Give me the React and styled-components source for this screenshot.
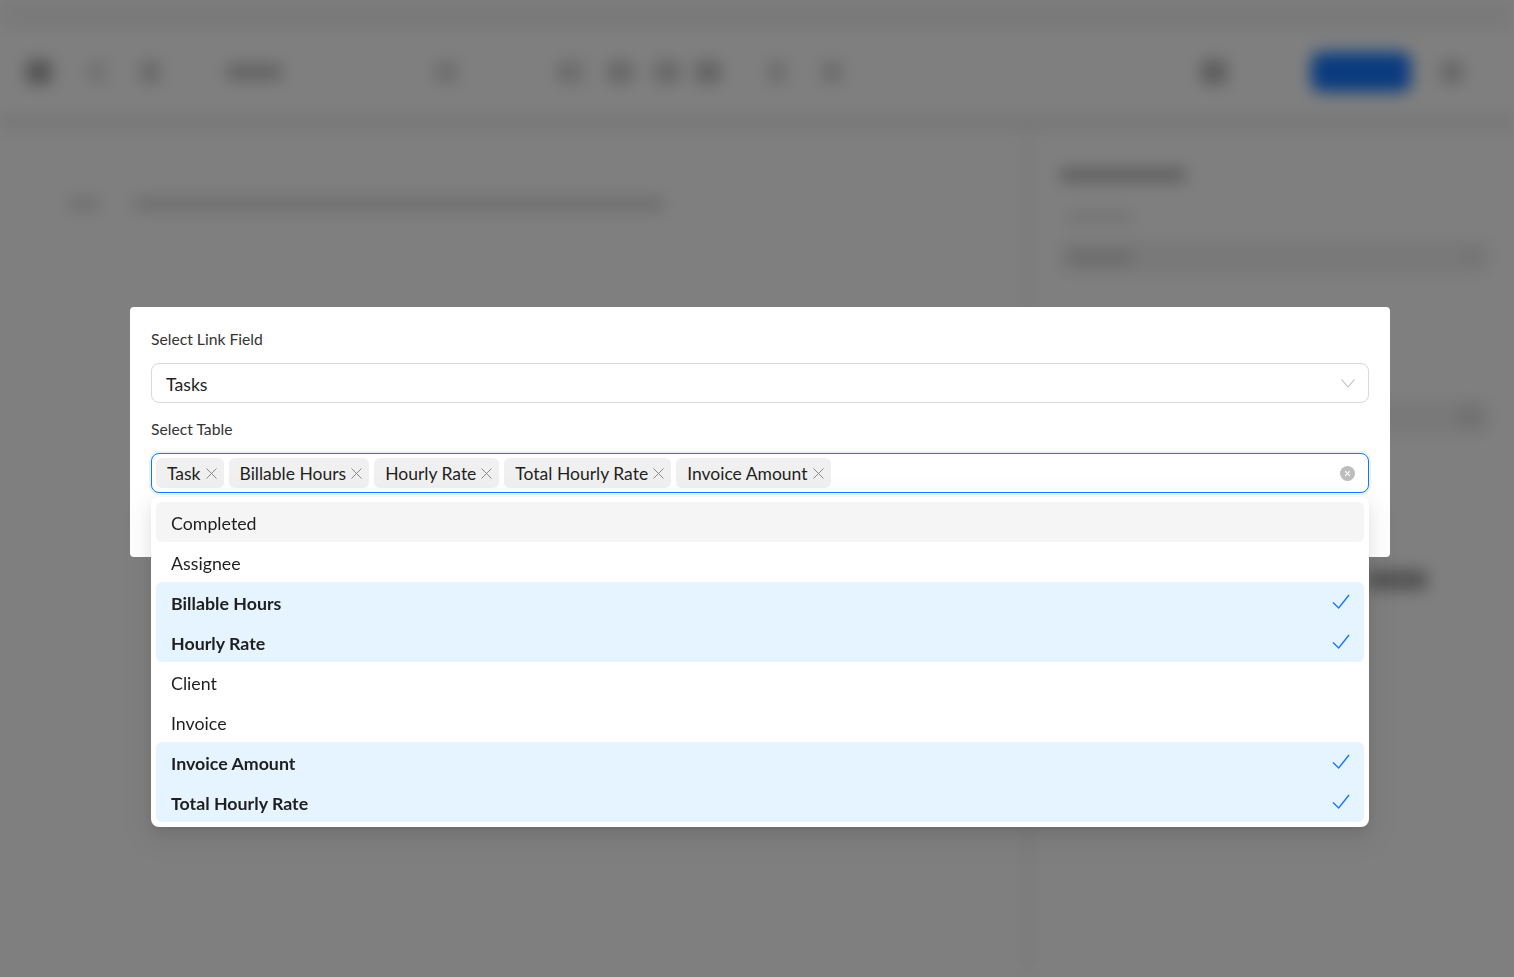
import React from 'react';
import styled, { createGlobalStyle } from 'styled-components';

const GlobalStyle = createGlobalStyle`
    html, body {
        margin:0;
        height:100%;
        overflow:hidden;
        background:#fff;
        font-family:"Lato", "Open Sans", "Liberation Sans", sans-serif;
    }
`;

const Page = styled.div`
    width:1514px;
    height:977px;
    display:flex;
    flex-direction:column;
    background:#fff;
    filter:blur(8px);
`;

const TopBar = styled.header`
    height:130px;
    flex:none;
    box-sizing:border-box;
    padding:0 51px 0 26px;
    display:flex;
    align-items:center;
    background:#fff;
    border-top:30px solid #f4f4f4;
    border-bottom:16px solid #efefef;
`;

const Blob = styled.span`
    flex:none;
    width:${p => p.$w || 20}px;
    height:${p => p.$h || 22}px;
    margin-left:${p => p.$gap || 0}px;
    border-radius:${p => p.$round || 4}px;
    background:${p => p.$color || '#d8d8d8'};
`;

const Spacer = styled.div`
    flex:1;
`;

const Body = styled.div`
    flex:1;
    display:flex;
`;

const Main = styled.main`
    flex:1;
    padding:62px 0 0 68px;
`;

const Crumbs = styled.div`
    display:flex;
    align-items:center;
    height:24px;
`;

const Side = styled.aside`
    width:489px;
    flex:none;
    box-sizing:border-box;
    padding:38px 24px 0 29px;
    border-left:6px solid #efefef;
    display:flex;
    flex-direction:column;
    align-items:flex-start;
`;

const SideTitle = styled.div`
    width:126px;
    height:14px;
    background:#bcbcbc;
    border-radius:4px;
`;

const SideLabel = styled.div`
    width:66px;
    height:10px;
    margin:30px 0 0 7px;
    background:#e4e4e4;
`;

const SideField = styled.div`
    width:100%;
    height:34px;
    margin-top:${p => p.$gap}px;
    box-sizing:border-box;
    padding:0 8px 0 7px;
    display:flex;
    align-items:center;
    justify-content:space-between;
    background:#f2f2f2;
    border-radius:4px;
`;

const SideValue = styled.div`
    width:66px;
    height:11px;
    background:#cfcfcf;
`;

const SideButton = styled.div`
    width:60px;
    height:20px;
    margin:136px 0 0 307px;
    border-radius:4px;
    background:#a4a4a4;
`;

const Overlay = styled.div`
    position:fixed;
    inset:0;
    background:rgba(0,0,0,0.5);
    display:flex;
    justify-content:center;
    align-items:flex-start;
    padding:307px 0 0 6px;
    box-sizing:border-box;
`;

const Modal = styled.div`
    width:1260px;
    height:250px;
    box-sizing:border-box;
    padding:20px 21px;
    background:#fff;
    border-radius:4px;
    color:#1f1f1f;
`;

const Field = styled.div`
    position:relative;
    display:flex;
    flex-direction:column;
`;

const Label = styled.label`
    display:block;
    height:24px;
    line-height:24px;
    font-size:15.7px;
    color:#333;
    margin-bottom:12px;
`;

const SelectBox = styled.div`
    height:40px;
    box-sizing:border-box;
    display:flex;
    align-items:center;
    border:1px solid ${p => (p.$focused ? '#1677ff' : '#d9d9d9')};
    border-radius:8px;
    background:#fff;
    margin-bottom:${p => (p.$focused ? 0 : 14)}px;
    padding:${p => (p.$focused ? '0 13px 0 4px' : '0 13px 0 14px')};
    box-shadow:${p => (p.$focused ? '0 0 0 2px rgba(5,145,255,0.1)' : 'none')};
    font-size:17.7px;
    color:#1f1f1f;
`;

const Value = styled.span`
    flex:1;
    padding-top:2px;
`;

const Tags = styled.div`
    flex:1;
    display:flex;
    align-items:center;
    gap:5px;
`;

const Tag = styled.span`
    display:flex;
    align-items:center;
    height:30px;
    box-sizing:border-box;
    padding:0 7px 0 11px;
    gap:5px;
    border-radius:6px;
    background:#f0f0f0;
    font-size:17.5px;
    white-space:nowrap;
`;

const TagClose = styled.svg`
    width:11px;
    height:11px;
    flex:none;
    stroke:#8a8a8a;
    stroke-width:1;
    fill:none;
`;

const Dropdown = styled.div`
    position:absolute;
    left:0;
    right:0;
    top:80px;
    box-sizing:border-box;
    padding:5px;
    background:#fff;
    border-radius:8px;
    box-shadow:0 6px 16px rgba(0,0,0,0.08), 0 3px 6px -4px rgba(0,0,0,0.12), 0 9px 28px 8px rgba(0,0,0,0.05);
`;

const Option = styled.div`
    height:40px;
    box-sizing:border-box;
    padding:2px 15px 0;
    display:flex;
    align-items:center;
    justify-content:space-between;
    font-size:17.8px;
    font-weight:${p => (p.$selected ? 700 : 400)};
    color:#1f1f1f;
    background:${p => (p.$selected ? '#e6f4ff' : p.$active ? '#f5f5f5' : 'transparent')};
    border-radius:${p => (p.$first ? '6px' : '0')} ${p => (p.$first ? '6px' : '0')} ${p => (p.$last ? '6px' : '0')} ${p => (p.$last ? '6px' : '0')};
`;

const Check = styled.svg`
    width:18px;
    height:18px;
    margin:-2px -1px 0 0;
    fill:none;
    stroke:#1677ff;
    stroke-width:1.4;
`;

const tags = ['Task', 'Billable Hours', 'Hourly Rate', 'Total Hourly Rate', 'Invoice Amount'];

const options = [
    { label: 'Completed', active: true, first: true, last: true },
    { label: 'Assignee' },
    { label: 'Billable Hours', selected: true, first: true },
    { label: 'Hourly Rate', selected: true, last: true },
    { label: 'Client' },
    { label: 'Invoice' },
    { label: 'Invoice Amount', selected: true, first: true },
    { label: 'Total Hourly Rate', selected: true, last: true },
];

const App = () => {

    return(
        <>
            <GlobalStyle />
            <Page>
                <TopBar>
                    <Blob $w={26} $h={24} $color="#a6a6a6" />
                    <Blob $w={18} $gap={36} $color="#e2e2e2" />
                    <Blob $w={20} $gap={34} $color="#d0d0d0" />
                    <Blob $w={56} $h={16} $gap={66} $color="#c4c4c4" />
                    <Blob $w={22} $gap={153} $color="#dadada" />
                    <Blob $w={26} $gap={100} $color="#d8d8d8" />
                    <Blob $w={26} $gap={24} $color="#cecece" />
                    <Blob $w={26} $gap={21} $color="#cecece" />
                    <Blob $w={26} $gap={15} $color="#c4c4c4" />
                    <Blob $w={18} $gap={47} $color="#d8d8d8" />
                    <Blob $w={20} $gap={36} $color="#d8d8d8" />
                    <Spacer />
                    <Blob $w={26} $h={24} $color="#b8b8b8" />
                    <Blob $w={100} $h={40} $gap={84} $round={10} $color="#1677ff" />
                    <Blob $w={22} $gap={30} $color="#cccccc" />
                </TopBar>
                <Body>
                    <Main>
                        <Crumbs>
                            <Blob $w={32} $h={12} $color="#dcdcdc" />
                            <Blob $w={530} $h={14} $gap={34} $color="#dcdcdc" />
                        </Crumbs>
                    </Main>
                    <Side>
                        <SideTitle />
                        <SideLabel />
                        <SideField $gap={18}><SideValue /><Blob $w={20} $h={14} $color="#e6e6e6" /></SideField>
                        <SideField $gap={126}><SideValue /><Blob $w={24} $h={20} $color="#e0e0e0" /></SideField>
                        <SideButton />
                    </Side>
                </Body>
            </Page>
            <Overlay>
                <Modal>
                    <Field>
                        <Label>Select Link Field</Label>
                        <SelectBox>
                            <Value>Tasks</Value>
                            <svg width="14" height="14" viewBox="0 0 14 14" fill="none" stroke="#bfbfbf" strokeWidth="1.1">
                                <path d="M.5 3.5 7 11l6.5-7.5" />
                            </svg>
                        </SelectBox>
                    </Field>
                    <Field>
                        <Label>Select Table</Label>
                        <SelectBox $focused>
                            <Tags>
                                {tags.map(tag => (
                                    <Tag key={tag}>
                                        {tag}
                                        <TagClose viewBox="0 0 11 11"><path d="M.5.5l10 10M10.5.5l-10 10" /></TagClose>
                                    </Tag>
                                ))}
                            </Tags>
                            <svg width="15" height="15" viewBox="0 0 15 15">
                                <circle cx="7.5" cy="7.5" r="7.5" fill="#bdbdbd" />
                                <path d="M5.2 5.2l4.6 4.6M9.8 5.2l-4.6 4.6" stroke="#fff" strokeWidth="1.2" />
                            </svg>
                        </SelectBox>
                        <Dropdown>
                            {options.map(opt => (
                                <Option key={opt.label} $selected={opt.selected} $active={opt.active} $first={opt.first} $last={opt.last}>
                                    {opt.label}
                                    {opt.selected && <Check viewBox="0 0 18 18"><path d="M1 9.5 6.7 15 17 2" /></Check>}
                                </Option>
                            ))}
                        </Dropdown>
                    </Field>
                </Modal>
            </Overlay>
        </>
    )
}

export default App;
